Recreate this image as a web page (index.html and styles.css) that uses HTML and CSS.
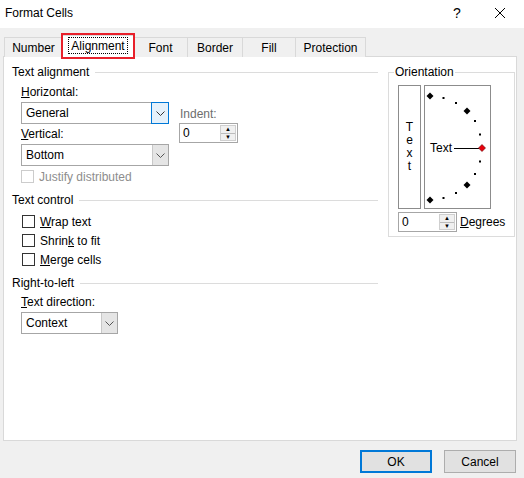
FILE: index.html
```html
<!DOCTYPE html>
<html lang="en">
<head>
  <meta charset="UTF-8">
  <title>Format Cells</title>
  <link rel="stylesheet" href="styles.css">
</head>
<body>

  <div class="dialog">
    <div class="titlebar">
      <span class="title">Format Cells</span>
      <span class="help">?</span>
      <span class="close">
        <svg width="12" height="12" viewBox="0 0 12 12"><path d="M1 1 L11 11 M11 1 L1 11" stroke="#000" stroke-width="1"/></svg>
      </span>
    </div>

    <!-- Tabs -->
    <div class="tabs">
      <div class="tab tab-number">Number</div>
      <div class="tab tab-active"><span class="focus">Alignment</span></div>
      <div class="tab tab-font">Font</div>
      <div class="tab tab-border">Border</div>
      <div class="tab tab-fill">Fill</div>
      <div class="tab tab-protection">Protection</div>
    </div>

    <div class="panel">
      <div class="left">
        <div class="group-title first">Text alignment</div>

        <div class="align-row">
          <div class="align-fields">
            <div class="label first"><u>H</u>orizontal:</div>
            <div class="select wide">
              <span class="value">General</span>
              <span class="arrow arrow-hot"><svg width="9" height="5" viewBox="0 0 9 5"><path d="M0.5 0.5 L4.5 4.5 L8.5 0.5" fill="none" stroke="#333"/></svg></span>
            </div>
            <div class="label"><u>V</u>ertical:</div>
            <div class="select wide">
              <span class="value">Bottom</span>
              <span class="arrow"><svg width="9" height="5" viewBox="0 0 9 5"><path d="M0.5 0.5 L4.5 4.5 L8.5 0.5" fill="none" stroke="#555"/></svg></span>
            </div>
          </div>
          <div class="indent">
            <div class="indent-label">Indent:</div>
            <div class="spinner">
              <span class="value">0</span>
              <span class="spin">
                <span class="spin-up">&#9650;</span>
                <span class="spin-down">&#9660;</span>
              </span>
            </div>
          </div>
        </div>

        <div class="check disabled"><span class="box"></span>Justify distributed</div>

        <div class="group-title">Text control</div>
        <div class="checks">
          <div class="check"><span class="box"></span><span><u>W</u>rap text</span></div>
          <div class="check"><span class="box"></span><span>Shrin<u>k</u> to fit</span></div>
          <div class="check"><span class="box"></span><span><u>M</u>erge cells</span></div>
        </div>

        <div class="group-title">Right-to-left</div>
        <div class="label direction"><u>T</u>ext direction:</div>
        <div class="select narrow">
          <span class="value">Context</span>
          <span class="arrow"><svg width="9" height="5" viewBox="0 0 9 5"><path d="M0.5 0.5 L4.5 4.5 L8.5 0.5" fill="none" stroke="#555"/></svg></span>
        </div>
      </div>

      <fieldset class="orientation">
        <legend>Orientation</legend>
        <div class="orient-boxes">
          <div class="vertical-text">
            <span>T</span><span>e</span><span>x</span><span>t</span>
          </div>
          <div class="arc">
            <svg width="65" height="122" viewBox="0 0 65 122">
              <g fill="#000">
                <path d="M5 6.5 L8.5 10 L5 13.5 L1.5 10 Z"/>
                <path d="M42 21.5 L45.5 25 L42 28.5 L38.5 25 Z"/>
                <path d="M42 95.5 L45.5 99 L42 102.5 L38.5 99 Z"/>
                <path d="M5 110.5 L8.5 114 L5 117.5 L1.5 114 Z"/>
                <rect x="17.5" y="11" width="2" height="2"/>
                <rect x="30" y="16" width="2" height="2"/>
                <rect x="49" y="34" width="2" height="2"/>
                <rect x="54" y="47.5" width="2" height="2"/>
                <rect x="54" y="74.5" width="2" height="2"/>
                <rect x="49" y="87" width="2" height="2"/>
                <rect x="30" y="106" width="2" height="2"/>
                <rect x="17.5" y="111" width="2" height="2"/>
              </g>
              <text x="5" y="66" class="arc-label">Text</text>
              <line x1="29" y1="62.5" x2="54" y2="62.5" stroke="#000" stroke-width="1"/>
              <path d="M57 58.5 L60.5 62 L57 65.5 L53.5 62 Z" fill="#e8000c" stroke="#5a0000" stroke-width="0.6"/>
            </svg>
          </div>
        </div>
        <div class="degrees-row">
          <div class="spinner">
            <span class="value">0</span>
            <span class="spin">
              <span class="spin-up">&#9650;</span>
              <span class="spin-down">&#9660;</span>
            </span>
          </div>
          <span class="degrees"><u>D</u>egrees</span>
        </div>
      </fieldset>
    </div>

    <div class="footer">
      <button class="btn btn-default">OK</button>
      <button class="btn">Cancel</button>
    </div>
  </div>

</body>
</html>
```

FILE: styles.css
```css
body {
  margin: 0;
  background: #f0f0f0;
  font-family: 'Liberation Sans', Arial, sans-serif;
  font-size: 12px;
  color: #000;
}

.dialog {
  width: 524px;
  height: 478px;
  overflow: hidden;
}

u {
  text-decoration: underline;
  text-underline-offset: 1px;
}

/* Title bar */
.titlebar {
  height: 28px;
  background: #fff;
  display: flex;
  align-items: center;
}

.title {
  padding-left: 5px;
  padding-bottom: 3px;
  flex: 1;
}

.help {
  font-size: 14px;
  width: 20px;
  text-align: center;
  margin-right: 27px;
  padding-bottom: 3px;
}

.close {
  width: 12px;
  height: 12px;
  margin-right: 18px;
  margin-bottom: 3px;
}

.close svg {
  display: block;
}

/* Tabs */
.tabs {
  display: flex;
  padding: 9px 0 0 4px;
  height: 20px;
  position: relative;
  z-index: 2;
}

.tab {
  height: 19px;
  line-height: 20px;
  border: 1px solid #d9d9d9;
  border-bottom: none;
  border-left: none;
  background: #f0f0f0;
  text-align: center;
}

.tab-number {
  width: 57px;
  border-left: 1px solid #d9d9d9;
}

.tab-active {
  position: relative;
  width: 70px;
  height: 22px;
  margin-top: -2px;
  background: #fff;
  line-height: 21px;
  border-left: 1px solid #d9d9d9;
  margin-left: -1px;
}

/* red highlight box around the selected tab */
.tab-active::after {
  content: "";
  position: absolute;
  left: -2px;
  top: -3px;
  width: 74px;
  height: 26px;
  border: 2px solid #e8202a;
  box-sizing: border-box;
}

.focus {
  border: 1px dotted #000;
  padding: 1px 2px 0 2px;
}

.tab-font { width: 53px; }
.tab-border { width: 54px; }
.tab-fill { width: 52px; }
.tab-protection { width: 69px; }

/* Panel */
.panel {
  position: relative;
  z-index: 1;
  margin: -1px 7px 0 3px;
  height: 383px;
  background: #fff;
  border: 1px solid #d9d9d9;
  display: flex;
}

.left {
  width: 366px;
  padding-left: 8px;
}

.group-title {
  display: flex;
  align-items: center;
  height: 14px;
  margin-top: 7px;
}

.group-title.first {
  margin-top: 8px;
}

.group-title::after {
  content: "";
  flex: 1;
  border-top: 1px solid #dcdcdc;
  margin-left: 6px;
  margin-top: 1px;
}

.label {
  height: 14px;
  line-height: 14px;
  margin: 3px 0 3px 9px;
}

.label.first {
  margin-top: 6px;
}

.label.direction {
  margin-top: 5px;
}

/* Combo boxes */
.select {
  display: flex;
  height: 20px;
  border: 1px solid #a6a6a6;
  margin-left: 9px;
  background: #fff;
}

.select.wide { width: 146px; }
.select.narrow { width: 95px; }

.select .value {
  flex: 1;
  line-height: 20px;
  padding-left: 4px;
}

.arrow {
  width: 15px;
  background: #e5e5e5;
  border-left: 1px solid #c8c8c8;
  display: flex;
  align-items: center;
  justify-content: center;
}

.arrow-hot {
  background: #e5f1fb;
  border: 1px solid #0078d7;
  margin: -1px -1px -1px 0;
  width: 16px;
}

.arrow svg {
  display: block;
}

.align-row {
  display: flex;
}

.indent {
  margin-left: 10px;
  padding-top: 28px;
}

.indent-label {
  color: #6d6d6d;
  height: 14px;
  line-height: 14px;
  margin: 0 0 2px 1px;
}

/* Spinners */
.spinner {
  display: flex;
  width: 57px;
  height: 18px;
  border: 1px solid #a6a6a6;
  background: #fff;
}

.spinner .value {
  flex: 1;
  line-height: 18px;
  padding-left: 3px;
}

.spin {
  width: 14px;
  margin: 1px 1px 1px 0;
  border: 1px solid #cfcfcf;
  background: #f0f0f0;
  display: flex;
  flex-direction: column;
  font-size: 6px;
  line-height: 7px;
  text-align: center;
  color: #000;
}

.spin-up {
  flex: 1;
  border-bottom: 1px solid #bcbcbc;
}

.spin-down {
  flex: 1;
}

/* Check boxes */
.check {
  display: flex;
  align-items: center;
  height: 19px;
  margin-left: 10px;
}

.check .box {
  width: 11px;
  height: 11px;
  border: 1px solid #333;
  background: #fff;
  margin-right: 5px;
}

.check.disabled {
  color: #8d8d8d;
  margin-left: 9px;
  margin-top: 1px;
}

.check.disabled .box {
  border-color: #cccccc;
}

.checks {
  margin-top: 5px;
}

/* Orientation */
.orientation {
  margin: 8px 0 0 10px;
  padding: 0 9px 4px 9px;
  width: 101px;
  height: fit-content;
  border: 1px solid #dcdcdc;
  box-sizing: content-box;
}

.orientation legend {
  padding: 0 1px;
  margin-left: -4px;
  line-height: 14px;
}

.orient-boxes {
  display: flex;
  gap: 3px;
  margin-top: 6px;
}

.vertical-text {
  width: 21px;
  height: 122px;
  border: 1px solid #8c8c8c;
  display: flex;
  flex-direction: column;
  align-items: center;
  justify-content: center;
  line-height: 13px;
}

.arc {
  width: 65px;
  height: 122px;
  border: 1px solid #8c8c8c;
}

.arc svg {
  display: block;
}

.arc-label {
  font-family: 'Liberation Sans', Arial, sans-serif;
  font-size: 12px;
}

.degrees-row {
  display: flex;
  align-items: center;
  margin-top: 3px;
}

.degrees {
  margin-left: 3px;
}

/* Footer buttons */
.footer {
  display: flex;
  justify-content: flex-end;
  gap: 12px;
  padding: 9px 8px 0 0;
}

.btn {
  width: 72px;
  height: 23px;
  font-family: 'Liberation Sans', Arial, sans-serif;
  font-size: 12px;
  background: #e1e1e1;
  border: 1px solid #adadad;
  color: #000;
  padding: 0;
}

.btn-default {
  border: 2px solid #0078d7;
}
```
